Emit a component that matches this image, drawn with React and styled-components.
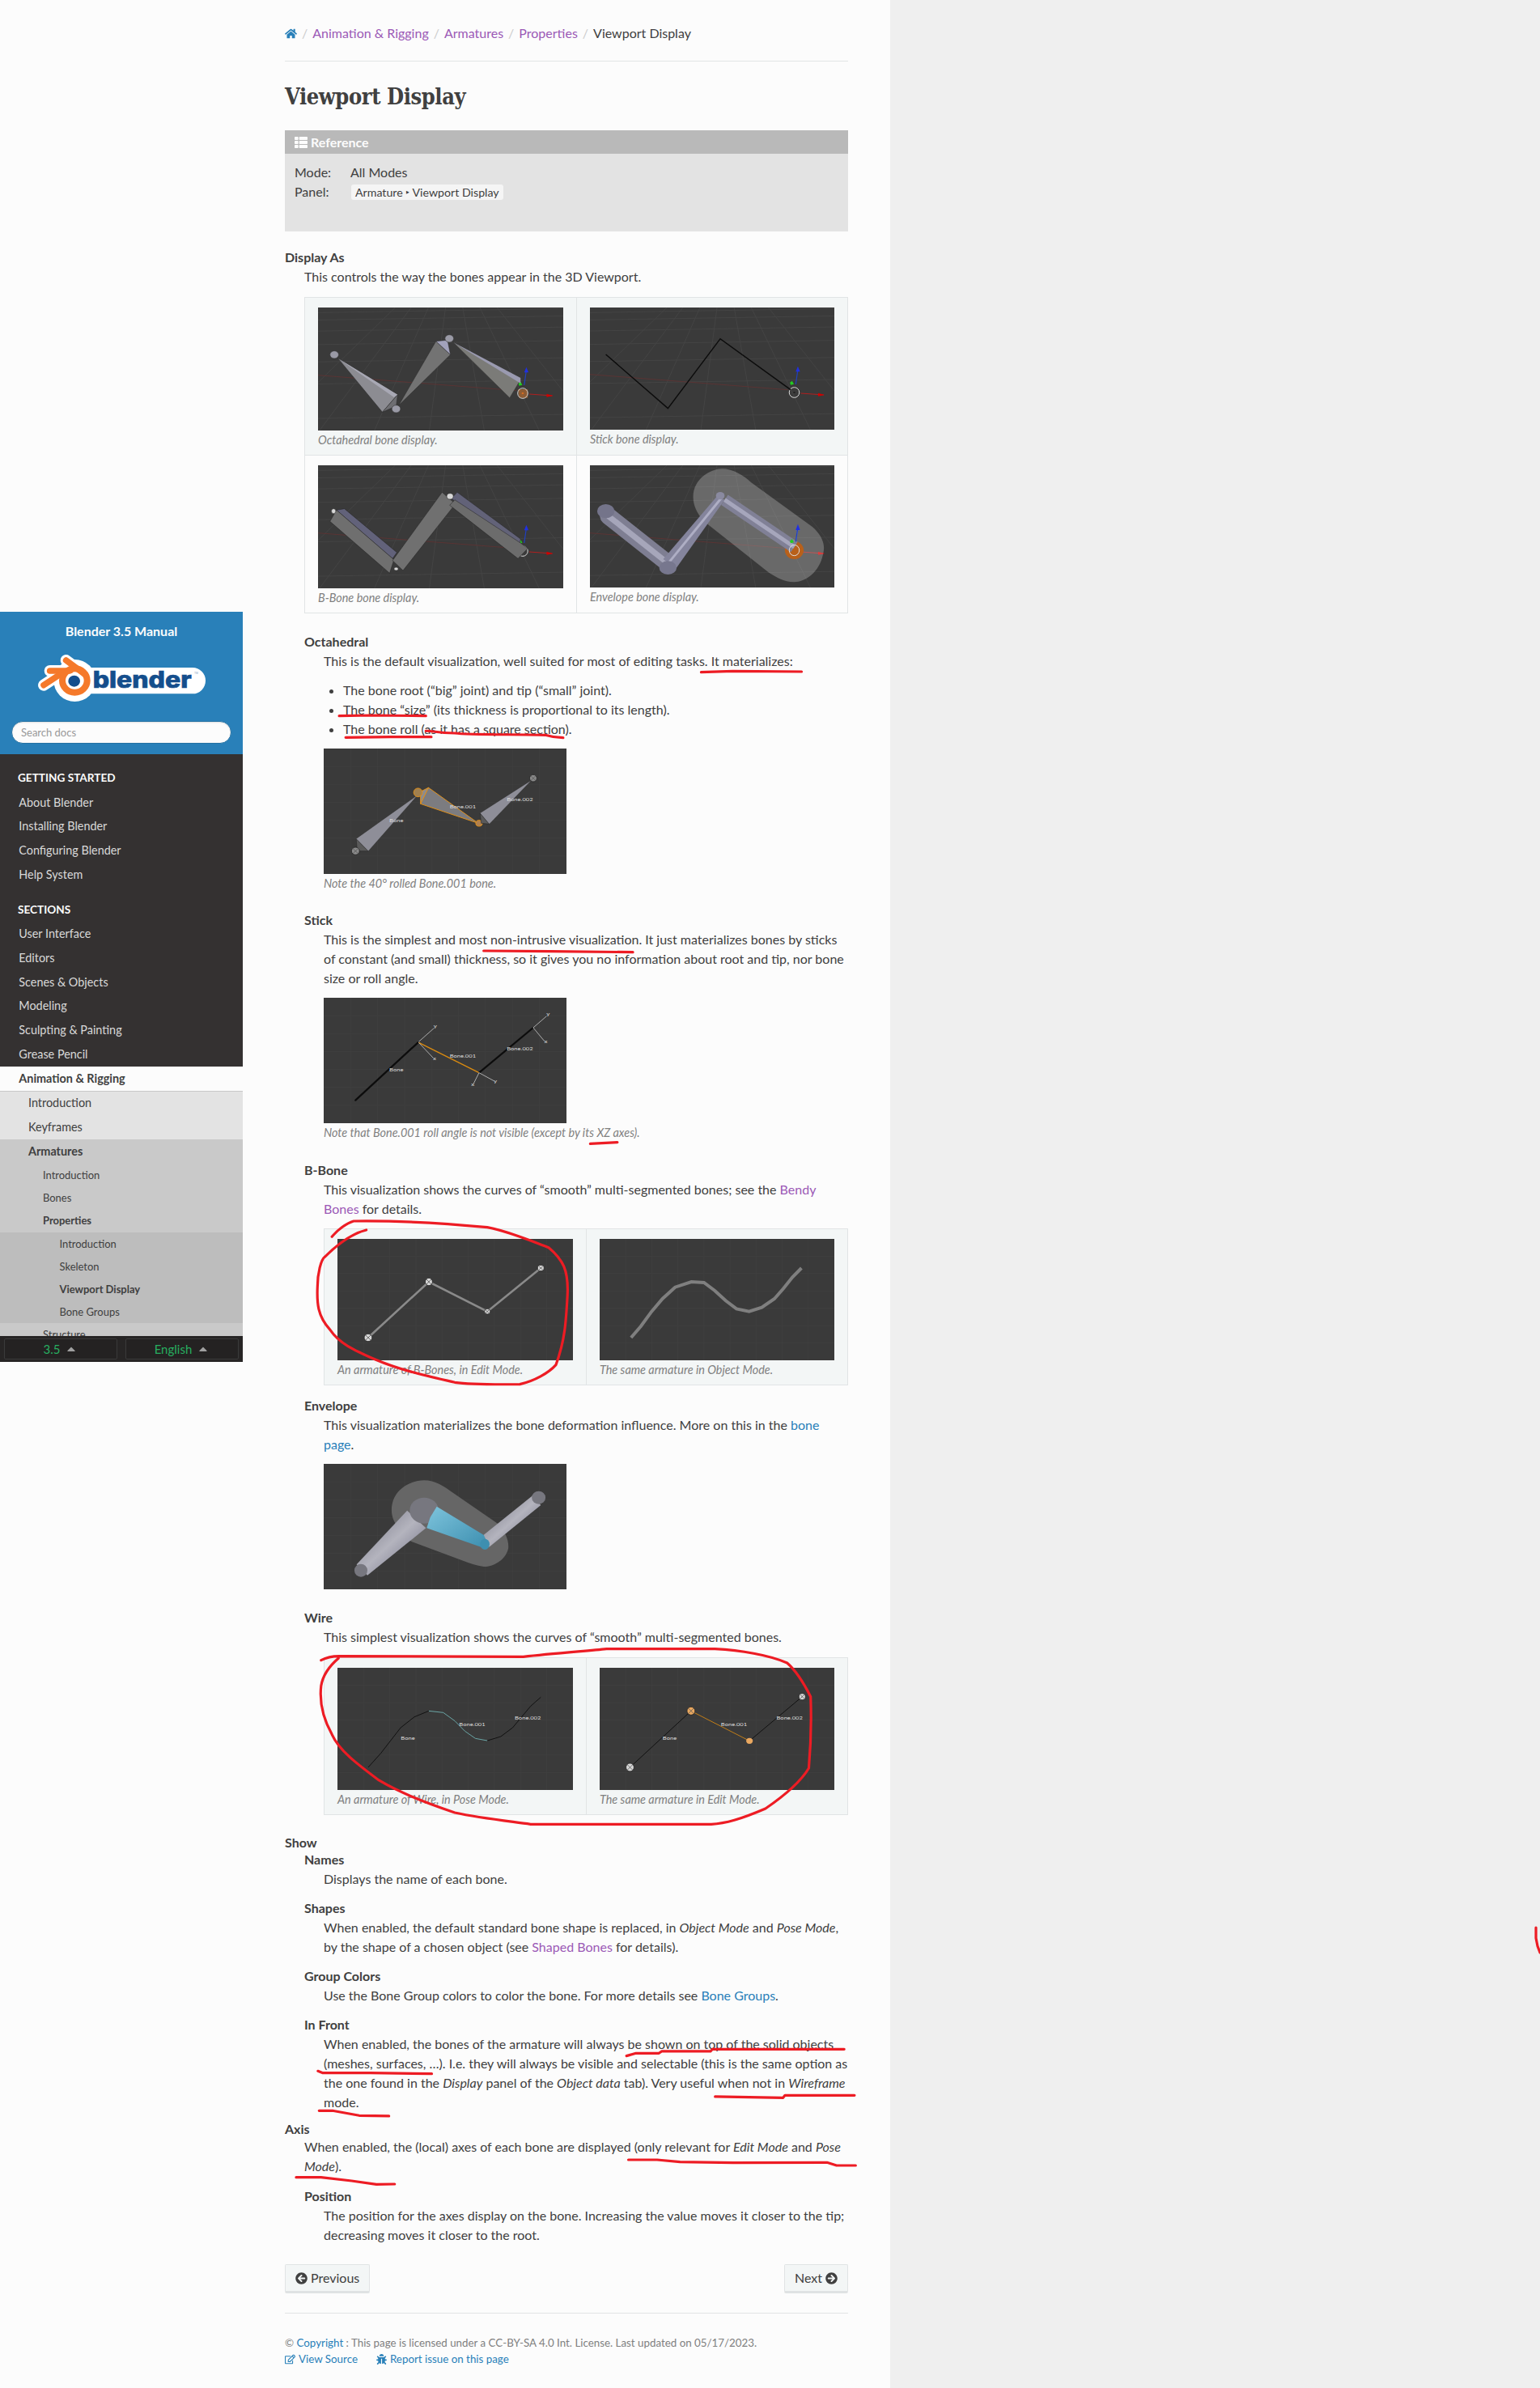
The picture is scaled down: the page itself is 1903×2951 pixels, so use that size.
import React from "react";
import styled, { createGlobalStyle } from "styled-components";
import { FaHome, FaThList, FaArrowCircleLeft, FaArrowCircleRight, FaRegEdit, FaBug, FaCaretUp } from "react-icons/fa";

const Global = createGlobalStyle`
  html, body { margin: 0; padding: 0; background: #efefef; }
  body { font-family: "Lato", "Liberation Sans", sans-serif; color: #404040; font-size: 16px; line-height: 24px; }
  * { box-sizing: border-box; }
`;

const Canvas = styled.div`
  position: relative;
  width: 1903px;
  height: 2951px;
  overflow: hidden;
  background: #efefef;
`;
const Page = styled.div`
  display: flex;
  width: 1100px;
  height: 2951px;
  background: #fcfcfc;
`;
const Side = styled.aside`
  flex: none;
  width: 300px;
  height: 927px;
  margin-top: 756px;
  display: flex;
  flex-direction: column;
`;
const SideHead = styled.div`
  height: 176px;
  background: #2980b9;
  padding-top: 12px;
  color: #fcfcfc;
  text-align: center;
`;
const SideTitle = styled.div`
  font-weight: 700;
  font-size: 16px;
  line-height: 24px;
`;
const LogoBox = styled.div`
  margin: 8px 0 16px 30px;
  width: 240px;
  height: 75px;
  & svg { display: block; }
`;
const Search = styled.div`
  margin: 0 14px;
  height: 28px;
  border-radius: 14px;
  border: 1px solid #2472a4;
  background: #fcfcfc;
  box-shadow: inset 0 1px 2px rgba(0,0,0,.12);
  color: #999;
  font-size: 13px;
  line-height: 26px;
  text-align: left;
  padding-left: 11px;
`;
const Nav = styled.nav`
  height: 719px;
  overflow: hidden;
  background: #343131;
`;
const Caption = styled.div`
  font-weight: 700;
  font-size: 13.6px;
  line-height: 32px;
  margin-top: ${p => p.$top}px;
  padding-left: 22px;
  color: #fcfcfc;
`;
const levelStyle = {
  1: { bg: "transparent", fg: "#d9d9d9", pad: 23.3, size: 14.4, py: 5.83 },
  2: { bg: "#e3e3e3", fg: "#404040", pad: 35, size: 14.4, py: 5.83 },
  3: { bg: "#c9c9c9", fg: "#404040", pad: 53, size: 12.96, py: 5.2 },
  4: { bg: "#bdbdbd", fg: "#404040", pad: 73.5, size: 12.96, py: 5 },
  head: { bg: "#c9c9c9", fg: "#404040", pad: 35, size: 14.4, py: 5.83 },
};
const NavLink = styled.div`
  background: ${p => levelStyle[p.$level].bg};
  color: ${p => levelStyle[p.$level].fg};
  padding: ${p => levelStyle[p.$level].py}px 0 ${p => levelStyle[p.$level].py}px ${p => levelStyle[p.$level].pad}px;
  font-size: ${p => levelStyle[p.$level].size}px;
  font-weight: ${p => (p.$bold ? 700 : 400)};
  line-height: 18px;
`;
const NavCurrent = styled.div`
  background: #fcfcfc;
  color: #404040;
  font-weight: 700;
  font-size: 14.4px;
  line-height: 18px;
  padding: 6px 0 6px 23.3px;
  border-bottom: 1px solid #c9c9c9;
  height: 31px;
`;
const SideFoot = styled.div`
  height: 32px;
  background: #272525;
  padding: 3px 5px;
  display: grid;
  grid-template-columns: 140px 140px;
  gap: 10px;
`;
const VersionBtn = styled.div`
  border: 1px solid #3a3a3a;
  border-radius: 2px;
  background: #242222;
  color: #27ae60;
  font-size: 15px;
  line-height: 24px;
  display: flex;
  align-items: center;
  justify-content: center;
  gap: 6px;
  & svg { color: #a0a0a0; }
`;

const Main = styled.main`
  flex: 1;
  min-width: 0;
  padding: 29px 52px 0;
`;
const Crumbs = styled.div`
  display: flex;
  align-items: center;
  height: 24px;
`;
const CrumbLink = styled.span`
  color: #9b59b6;
`;
const Sep = styled.span`
  color: #cccccc;
  padding: 0 5px;
  margin: 0 1px;
`;
const HomeIcon = styled.span`
  color: #2980b9;
  display: flex;
`;
const Rule = styled.div`
  height: 1px;
  background: #e1e4e5;
  margin-top: ${p => p.$top}px;
`;
const Title = styled.h1`
  margin: 26px 0 0;
  font-family: "DejaVu Serif", "Liberation Serif", serif;
  font-stretch: condensed;
  font-weight: 700;
  font-size: 27px;
  line-height: 36px;
  letter-spacing: -0.4px;
  color: #404040;
`;
const Admon = styled.div`
  margin-top: 23px;
  background: #e3e3e3;
  height: 125px;
`;
const AdmonHead = styled.div`
  height: 29px;
  background: #b9b9b9;
  color: #fcfcfc;
  font-weight: 700;
  padding-left: 12px;
  display: flex;
  align-items: center;
  gap: 4px;
  font-size: 16px;
`;
const Fields = styled.div`
  padding: 11px 0 0 12px;
`;
const FieldRow = styled.div`
  display: flex;
  height: 24px;
  align-items: center;
`;
const FieldName = styled.span`
  width: 69px;
`;
const Pill = styled.span`
  background: #f5f5f5;
  border-radius: 3px;
  padding: 0 5px;
  font-size: 14.2px;
  line-height: 19px;
  height: 19px;
  margin-left: 1px;
`;
const Term = styled.div`
  font-weight: 700;
  line-height: 24px;
  margin-top: ${p => p.$top || 0}px;
`;
const Dd = styled.div`
  margin-left: 24px;
`;
const P = styled.p`
  margin: ${p => p.$top || 0}px 0 0;
  line-height: 24px;
`;
const A = styled.span`
  color: ${p => (p.$visited ? "#9b59b6" : "#2980b9")};
`;
const Bullets = styled.ul`
  margin: 12px 0 0;
  padding: 0 0 0 24px;
  line-height: 24px;
`;
const Grid = styled.div`
  margin-top: ${p => p.$top || 12}px;
  border: 1px solid #e1e4e5;
  display: grid;
  grid-template-columns: repeat(2, ${p => p.$col}px);
`;
const Cell = styled.div`
  background: ${p => (p.$even ? "#fcfcfc" : "#f3f6f6")};
  padding: 12px 16px 6px;
  border-left: ${p => (p.$right ? "1px solid #e1e4e5" : "none")};
  border-top: ${p => (p.$even ? "1px solid #e1e4e5" : "none")};
`;
const Cap = styled.div`
  color: #808080;
  font-style: italic;
  font-size: 14.4px;
  line-height: 24px;
`;
const Fig = styled.div`
  margin-top: 12px;
`;
const ShotSvg = styled.svg`
  display: block;
  background: #3a3a3a;
  & * { vector-effect: non-scaling-stroke; }
  & text { font-family: "Lato", "Liberation Sans", sans-serif; fill: #dcdcdc; text-anchor: middle; }
`;
const Pager = styled.div`
  margin-top: 24px;
  display: flex;
  justify-content: space-between;
`;
const Btn = styled.div`
  height: 36px;
  padding: 0 12px;
  background: #f3f6f6;
  border: 1px solid #e1e4e5;
  border-bottom: 3px solid #dfe2e3;
  border-radius: 2px;
  display: flex;
  align-items: center;
  gap: 4px;
  color: #404040;
  font-size: 16px;
`;
const Foot = styled.div`
  margin-top: 26px;
  color: #808080;
  font-size: 13.35px;
  line-height: 20px;
`;
const FootLinks = styled.div`
  display: flex;
  gap: 23px;
  color: #2980b9;
  & span { display: inline-flex; align-items: center; gap: 4px; }
`;
const Overlay = styled.svg`
  position: absolute;
  left: 0;
  top: 0;
  pointer-events: none;
  & path { fill: none; stroke: #ed1c24; stroke-width: 3.2px; stroke-linecap: round; stroke-linejoin: round; vector-effect: non-scaling-stroke; }
`;

function Shot({ vb, w, h, children }) {
  return (
    <ShotSvg viewBox={vb} width={w} height={h} preserveAspectRatio="none">
      {children}
    </ShotSvg>
  );
}

function PGrid({ x, y, w, h }) {
  const rows = [0.02, 0.08, 0.17, 0.28, 0.42, 0.6, 0.88];
  const cols = [0.03, 0.16, 0.3, 0.44, 0.58, 0.72, 0.86];
  return (
    <g stroke="#444444" strokeWidth="1" fill="none">
      {rows.map(r => <line key={r} x1={x} y1={y + r * h + 10} x2={x + w} y2={y + r * h - 5} />)}
      {cols.map(c => <line key={c} x1={x + (c - 0.5) * w * 0.5 + w * 0.55} y1={y} x2={x + (c - 0.5) * w * 1.6 + w * 0.55} y2={y + h} />)}
    </g>
  );
}
function FlatGrid({ x, y, w, h }) {
  const n = [...Array(8).keys()];
  return (
    <g stroke="#3f3f3f" strokeWidth="1">
      {n.map(i => <line key={"v" + i} x1={x + (i + 1) * w / 9} y1={y} x2={x + (i + 1) * w / 9} y2={y + h} />)}
      {n.slice(0, 6).map(i => <line key={"h" + i} x1={x} y1={y + (i + 1) * h / 7} x2={x + w} y2={y + (i + 1) * h / 7} />)}
    </g>
  );
}
function Axes({ dy = 0, orange }) {
  return (
    <g transform={`translate(0 ${dy})`}>
      <line x1="52" y1="308" x2="600" y2="365" stroke="#5a3434" strokeWidth="1" />
      <line x1="636" y1="378" x2="700" y2="384" stroke="#b02020" strokeWidth="1" />
      <polygon points="684,377 702,384 684,389" fill="#d00000" />
      <line x1="622" y1="345" x2="628" y2="290" stroke="#2040c0" strokeWidth="1.2" />
      <polygon points="622,298 628,278 634,298" fill="#2030e0" />
      <polygon points="606,338 612,332 617,344 608,347" fill="#22cc22" />
      <ellipse cx="618" cy="375" rx="14" ry="19" fill="none" stroke="#d8d8d8" strokeWidth="1" />
      <ellipse cx="618" cy="375" rx="3" ry="3" fill={orange ? "#e07020" : "#222"} />
    </g>
  );
}
const Joint = ({ x, y, rx = 12, ry = 14, fill = "#9a9aa6" }) => (
  <ellipse cx={x} cy={y} rx={rx} ry={ry} fill={fill} stroke="#333" strokeWidth="0.6" />
);
const XJoint = ({ x, y, rx = 10, ry = 13, fill = "#d8d8d8" }) => (
  <g>
    <ellipse cx={x} cy={y} rx={rx} ry={ry} fill={fill} stroke="#222" strokeWidth="0.8" />
    <line x1={x - rx * 0.6} y1={y - ry * 0.6} x2={x + rx * 0.6} y2={y + ry * 0.6} stroke="#555" strokeWidth="0.8" />
    <line x1={x - rx * 0.6} y1={y + ry * 0.6} x2={x + rx * 0.6} y2={y - ry * 0.6} stroke="#555" strokeWidth="0.8" />
  </g>
);
const Label = ({ x, y, children }) => <text x={x} y={y} fontSize="17">{children}</text>;

const OctaShot = () => (
  <Shot vb="52 57 678 456" w={303} h={152}>
    <PGrid x={52} y={57} w={678} h={456} />
    <polygon points="605,360 632,360 632,392 608,392" fill="#b06a30" opacity=".7" />
    <Axes orange />
    <polygon points="107,245 272,380 230,445" fill="#8c8c92" stroke="#2a2a2a" strokeWidth="0.5" />
    <polygon points="230,445 272,380 268,425 255,430" fill="#6e6e72" stroke="#2a2a2a" strokeWidth="0.5" />
    <polygon points="107,245 272,380 262,390" fill="#a8a8b4" />
    <Joint x={97} y={232} /><Joint x={268} y={433} />
    <polygon points="275,420 378,182 418,232" fill="#737373" stroke="#2a2a2a" strokeWidth="0.5" />
    <polygon points="378,182 410,178 418,232" fill="#a2a2bc" stroke="#2a2a2a" strokeWidth="0.5" />
    <Joint x={415} y={172} />
    <polygon points="425,185 612,325 582,392" fill="#7b7b78" stroke="#2a2a2a" strokeWidth="0.5" />
    <polygon points="425,185 612,318 612,338" fill="#9a9ab0" />
  </Shot>
);
const StickShot = () => (
  <Shot vb="52 60 677 453" w={302} h={151}>
    <PGrid x={52} y={60} w={677} h={453} />
    <Axes />
    <polyline points="96,234 268,434 413,176 608,365" fill="none" stroke="#0c0c0c" strokeWidth="1.5" />
  </Shot>
);
const BboneShot = () => (
  <Shot vb="52 642 678 456" w={303} h={152}>
    <PGrid x={52} y={642} w={678} h={456} />
    <Axes dy={585} />
    <polygon points="103,808 125,803 270,965 258,988" fill="#62627a" stroke="#222" strokeWidth="0.5" />
    <polygon points="85,850 103,808 262,992 250,1042" fill="#6f6f6f" stroke="#222" strokeWidth="0.5" />
    <polygon points="258,995 395,742 432,785 287,1032" fill="#707070" stroke="#222" strokeWidth="0.5" />
    <polygon points="437,742 612,915 610,935 420,765" fill="#626278" stroke="#222" strokeWidth="0.5" />
    <polygon points="416,790 430,770 612,930 632,950 605,988" fill="#6c6c6c" stroke="#222" strokeWidth="0.5" />
    <Joint x={95} y={812} rx={6} ry={9} fill="#d8d8d8" /><Joint x={417} y={757} rx={9} ry={11} fill="#d8d8d8" /><Joint x={268} y={1026} rx={6} ry={6} fill="#d8d8d8" />
  </Shot>
);
const EnvShot = () => (
  <Shot vb="52 642 677 453" w={302} h={151}>
    <defs>
      <linearGradient id="envbone" x1="0" y1="0" x2="1" y2="0">
        <stop offset="0" stopColor="#6e6e82" /><stop offset=".5" stopColor="#a8a8bc" /><stop offset="1" stopColor="#7a7a90" />
      </linearGradient>
    </defs>
    <PGrid x={52} y={642} w={677} h={453} />
    <Axes dy={585} />
    <path d="M338 760 C338 690 388 655 418 655 C448 655 478 680 498 705 L668 870 C698 905 704 940 698 970 C688 1040 648 1075 618 1075 C588 1075 568 1055 548 1040 L368 850 C348 820 338 790 338 760Z" fill="rgba(255,255,255,.24)" />
    <ellipse cx="618" cy="957" rx="26" ry="33" fill="#b8601a" />
    <line x1="103" y1="830" x2="268" y2="1005" stroke="#7e7e92" strokeWidth="21" strokeLinecap="round" />
    <line x1="103" y1="830" x2="268" y2="1005" stroke="#a6a6ba" strokeWidth="7" />
    <line x1="425" y1="770" x2="618" y2="945" stroke="#808096" strokeWidth="15" />
    <line x1="425" y1="770" x2="618" y2="945" stroke="#a6a6bc" strokeWidth="5" />
    <polygon points="255,990 405,755 425,770 290,1025" fill="#84849c" />
    <line x1="272" y1="1000" x2="415" y2="765" stroke="#aeaec4" strokeWidth="3" />
    <ellipse cx="96" cy="812" rx="24" ry="26" fill="#74748a" />
    <ellipse cx="268" cy="1022" rx="24" ry="25" fill="#77778e" />
    <ellipse cx="413" cy="755" rx="12" ry="14" fill="#8a8aa0" />
    <ellipse cx="618" cy="957" rx="14" ry="20" fill="none" stroke="#ddd" strokeWidth="1" />
    <line x1="622" y1="925" x2="628" y2="872" stroke="#2040c0" strokeWidth="1.2" />
    <polygon points="622,882 628,860 634,882" fill="#2030e0" />
    <polygon points="606,923 612,915 617,928 608,931" fill="#22cc22" />
  </Shot>
);
const NoteShot = () => (
  <Shot vb="67 435 672 465" w={300} h={155}>
    <FlatGrid x={67} y={435} w={672} h={465} />
    <polygon points="157,770 325,610 190,815" fill="#8e8e98" />
    <polygon points="157,770 190,815 160,815" fill="#5a5a5a" stroke="#222" strokeWidth="0.5" />
    <XJoint x={155} y={815} rx={11} ry={14} fill="#8a8a8a" />
    <polygon points="335,640 357,580 495,712" fill="#7c7c80" stroke="#e0901a" strokeWidth="1" />
    <polygon points="335,595 357,580 335,640" fill="#8c8c90" stroke="#e0901a" strokeWidth="1" />
    <ellipse cx="328" cy="598" rx="12" ry="16" fill="#a08050" stroke="#e0901a" strokeWidth="1" />
    <ellipse cx="497" cy="712" rx="9" ry="11" fill="#b08050" stroke="#e0901a" strokeWidth="1" />
    <polygon points="500,675 640,555 525,715" fill="#8e8e98" />
    <polygon points="500,675 525,715 503,712" fill="#5a5a5a" stroke="#222" strokeWidth="0.5" />
    <XJoint x={647} y={545} rx={10} ry={13} fill="#8a8a8a" />
    <Label x={268} y={708}>Bone</Label><Label x={452} y={656}>Bone.001</Label><Label x={610} y={630}>Bone.002</Label>
  </Shot>
);
const AxisLine = ({ x1, y1, x2, y2, name }) => (
  <g>
    <line x1={x1} y1={y1} x2={x2} y2={y2} stroke="#c8c8c8" strokeWidth="0.8" />
    <text x={x2 + (x2 > x1 ? 4 : -2)} y={y2 + (y2 > y1 ? 8 : -2)} fontSize="18">{name}</text>
  </g>
);
const StickAxesShot = () => (
  <Shot vb="67 372 672 465" w={300} h={155}>
    <FlatGrid x={67} y={372} w={672} h={465} />
    <line x1="155" y1="752" x2="328" y2="538" stroke="#0c0c0c" strokeWidth="2.2" strokeLinecap="round" />
    <line x1="330" y1="538" x2="497" y2="650" stroke="#d98a10" strokeWidth="1.4" />
    <line x1="497" y1="650" x2="647" y2="483" stroke="#0c0c0c" strokeWidth="2.2" />
    <AxisLine x1={330} y1={535} x2={372} y2={485} name="y" /><AxisLine x1={330} y1={538} x2={370} y2={595} name="x" />
    <AxisLine x1={497} y1={650} x2={538} y2={680} name="y" /><AxisLine x1={497} y1={650} x2={482} y2={690} name="x" />
    <AxisLine x1={647} y1={483} x2={684} y2={440} name="y" /><AxisLine x1={647} y1={483} x2={678} y2={533} name="x" />
    <Label x={268} y={645}>Bone</Label><Label x={452} y={594}>Bone.001</Label><Label x={610} y={568}>Bone.002</Label>
  </Shot>
);
const BEditShot = () => (
  <Shot vb="105 96 652 450" w={291} h={150}>
    <FlatGrid x={105} y={96} w={652} h={450} />
    <polyline points="190,462 358,255 520,365 668,204" fill="none" stroke="#8a8a8a" strokeWidth="2.6" />
    <XJoint x={190} y={462} rx={11} ry={14} /><XJoint x={358} y={255} rx={10} ry={14} /><XJoint x={520} y={365} rx={8} ry={10} /><XJoint x={668} y={204} rx={9} ry={11} />
  </Shot>
);
const BObjShot = () => (
  <Shot vb="831 96 650 450" w={290} h={150}>
    <FlatGrid x={831} y={96} w={650} h={450} />
    <polyline points="918,462 945,420 975,365 1005,318 1040,275 1085,255 1120,258 1150,288 1180,325 1210,355 1245,365 1280,350 1315,318 1340,280 1365,238 1390,204" fill="none" stroke="#7f7f7f" strokeWidth="4" />
  </Shot>
);
const EnvEditShot = () => (
  <Shot vb="67 927 672 465" w={300} h={155}>
    <defs>
      <linearGradient id="metal" x1="0" y1="0" x2="1" y2="1">
        <stop offset="0" stopColor="#6e6e7c" /><stop offset=".5" stopColor="#b4b4be" /><stop offset="1" stopColor="#62627a" />
      </linearGradient>
      <linearGradient id="teal" x1="0" y1="0" x2="1" y2="1">
        <stop offset="0" stopColor="#7ec4dc" /><stop offset="1" stopColor="#3d8fb0" />
      </linearGradient>
    </defs>
    <FlatGrid x={67} y={927} w={672} h={465} />
    <path d="M255 1100 C255 1020 310 988 345 988 C375 988 400 1010 420 1030 L550 1150 C570 1180 580 1210 578 1240 C570 1290 530 1310 510 1308 C490 1305 470 1295 450 1285 L310 1215 C280 1185 255 1140 255 1100Z" fill="#666666" />
    <polygon points="158,1300 298,1100 350,1165 188,1340" fill="url(#metal)" />
    <ellipse cx="170" cy="1322" rx="18" ry="24" fill="#77777f" />
    <ellipse cx="345" cy="1100" rx="40" ry="48" fill="#77777f" />
    <polygon points="380,1085 515,1195 512,1240 352,1165 362,1125" fill="url(#teal)" />
    <polygon points="510,1190 645,1045 668,1080 525,1235" fill="url(#metal)" />
    <ellipse cx="513" cy="1225" rx="13" ry="20" fill="#3d8fb0" />
    <ellipse cx="662" cy="1052" rx="19" ry="24" fill="#77777f" />
  </Shot>
);
const WirePoseShot = () => (
  <Shot vb="105 183 652 453" w={291} h={151}>
    <FlatGrid x={105} y={183} w={652} h={453} />
    <polyline points="190,552 225,500 280,405 318,365 358,343" fill="none" stroke="#111" strokeWidth="1" />
    <polyline points="358,343 398,349 430,380 458,418 487,445 520,453" fill="none" stroke="#6aa5a5" strokeWidth="1" />
    <polyline points="520,453 557,438 590,405 640,325 668,292" fill="none" stroke="#111" strokeWidth="1" />
    <Label x={300} y={449}>Bone</Label><Label x={478} y={399}>Bone.001</Label><Label x={632} y={374}>Bone.002</Label>
  </Shot>
);
const WireEditShot = () => (
  <Shot vb="831 183 650 453" w={290} h={151}>
    <FlatGrid x={831} y={183} w={650} h={453} />
    <line x1="915" y1="552" x2="1084" y2="343" stroke="#111" strokeWidth="1" />
    <line x1="1084" y1="343" x2="1246" y2="454" stroke="#c27e18" strokeWidth="1" />
    <line x1="1246" y1="454" x2="1392" y2="290" stroke="#111" strokeWidth="1" />
    <XJoint x={915} y={552} rx={11} ry={15} /><XJoint x={1392} y={290} rx={9} ry={12} />
    <XJoint x={1084} y={343} rx={11} ry={15} fill="#eaa860" /><ellipse cx="1246" cy="454" rx="9" ry="11" fill="#eaa860" />
    <Label x={1025} y={449}>Bone</Label><Label x={1203} y={399}>Bone.001</Label><Label x={1357} y={374}>Bone.002</Label>
  </Shot>
);

const Logo = () => (
  <svg width="240" height="75" viewBox="0 0 720 225">
    <g fill="none" strokeLinecap="round" stroke="#fff" strokeWidth="42">
      <line x1="155" y1="48" x2="225" y2="100" />
      <line x1="95" y1="87" x2="170" y2="87" />
      <line x1="72" y1="140" x2="145" y2="92" />
    </g>
    <circle cx="187" cy="123" r="78" fill="#fff" />
    <rect x="200" y="75" width="472" height="97" rx="48" fill="#fff" />
    <g fill="none" strokeLinecap="round" stroke="#f5792a" strokeWidth="23">
      <line x1="155" y1="48" x2="225" y2="100" />
      <line x1="95" y1="87" x2="170" y2="87" />
      <line x1="72" y1="140" x2="145" y2="92" />
    </g>
    <ellipse cx="187" cy="123" rx="46" ry="44" fill="none" stroke="#f5792a" strokeWidth="24" />
    <circle cx="186" cy="123" r="29" fill="#fff" />
    <ellipse cx="185" cy="125" rx="22" ry="21" fill="#144e8c" />
    <text x="254" y="150" fontFamily="Inter, Liberation Sans, sans-serif" fontWeight="800" fontSize="84" fill="#144e8c" textLength="366" lengthAdjust="spacingAndGlyphs" stroke="#144e8c" strokeWidth="2">blender</text>
    <text x="630" y="100" fontFamily="Liberation Sans, sans-serif" fontSize="10" fill="#8aa6c4">TM</text>
  </svg>
);

const nav1 = ["About Blender", "Installing Blender", "Configuring Blender", "Help System"];
const nav2 = ["User Interface", "Editors", "Scenes & Objects", "Modeling", "Sculpting & Painting", "Grease Pencil"];
const sub3 = [["Introduction"], ["Bones"], ["Properties", true]];
const sub4 = [["Introduction"], ["Skeleton"], ["Viewport Display", true], ["Bone Groups"]];

const Scale = ({ x, y, k, d }) => (
  <g transform={`translate(${x} ${y}) scale(${k} 0.3333)`}>
    {d.map(p => <path key={p} d={p} />)}
  </g>
);
const K7 = 700 / 1568;
const K9 = 740 / 1568;

const Sidebar = () => (
  <Side>
    <SideHead>
      <SideTitle>Blender 3.5 Manual</SideTitle>
      <LogoBox><Logo /></LogoBox>
      <Search>Search docs</Search>
    </SideHead>
    <Nav>
      <Caption $top={13}>GETTING STARTED</Caption>
      {nav1.map(t => <NavLink key={t} $level={1}>{t}</NavLink>)}
      <Caption $top={12}>SECTIONS</Caption>
      {nav2.map(t => <NavLink key={t} $level={1}>{t}</NavLink>)}
      <NavCurrent>Animation &amp; Rigging</NavCurrent>
      <NavLink $level={2}>Introduction</NavLink>
      <NavLink $level={2}>Keyframes</NavLink>
      <NavLink $level="head" $bold>Armatures</NavLink>
      {sub3.map(([t, b]) => <NavLink key={t} $level={3} $bold={b}>{t}</NavLink>)}
      {sub4.map(([t, b]) => <NavLink key={t} $level={4} $bold={b}>{t}</NavLink>)}
      <NavLink $level={3}>Structure</NavLink>
    </Nav>
    <SideFoot>
      <VersionBtn>3.5 <FaCaretUp size={16} /></VersionBtn>
      <VersionBtn>English <FaCaretUp size={16} /></VersionBtn>
    </SideFoot>
  </Side>
);

export default function App() {
  return (
    <Canvas>
      <Global />
      <Page>
        <Sidebar />
        <Main>
          <Crumbs>
            <HomeIcon><FaHome size={15} /></HomeIcon><Sep>/</Sep>
            <CrumbLink>Animation &amp; Rigging</CrumbLink><Sep>/</Sep>
            <CrumbLink>Armatures</CrumbLink><Sep>/</Sep>
            <CrumbLink>Properties</CrumbLink><Sep>/</Sep>
            <span>Viewport Display</span>
          </Crumbs>
          <Rule $top={22} />
          <Title>Viewport Display</Title>
          <Admon>
            <AdmonHead><FaThList size={16} /> Reference</AdmonHead>
            <Fields>
              <FieldRow><FieldName>Mode:</FieldName><span>All Modes</span></FieldRow>
              <FieldRow><FieldName>Panel:</FieldName><Pill>Armature ‣ Viewport Display</Pill></FieldRow>
            </Fields>
          </Admon>

          <Term $top={20}>Display As</Term>
          <Dd>
            <P>This controls the way the bones appear in the 3D Viewport.</P>
            <Grid $col={335} $top={13}>
              <Cell><OctaShot /><Cap>Octahedral bone display.</Cap></Cell>
              <Cell $right><StickShot /><Cap>Stick bone display.</Cap></Cell>
              <Cell $even><BboneShot /><Cap>B-Bone bone display.</Cap></Cell>
              <Cell $even $right><EnvShot /><Cap>Envelope bone display.</Cap></Cell>
            </Grid>

            <Term $top={23}>Octahedral</Term>
            <Dd>
              <P>This is the default visualization, well suited for most of editing tasks. It materializes:</P>
              <Bullets>
                <li>The bone root (“big” joint) and tip (“small” joint).</li>
                <li>The bone “size” (its thickness is proportional to its length).</li>
                <li>The bone roll (as it has a square section).</li>
              </Bullets>
              <Fig><NoteShot /><Cap>Note the 40° rolled Bone.001 bone.</Cap></Fig>
            </Dd>

            <Term $top={21}>Stick</Term>
            <Dd>
              <P>This is the simplest and most non-intrusive visualization. It just materializes bones by sticks of constant (and small) thickness, so it gives you no information about root and tip, nor bone size or roll angle.</P>
              <Fig><StickAxesShot /><Cap>Note that Bone.001 roll angle is not visible (except by its XZ axes).</Cap></Fig>
            </Dd>

            <Term $top={22}>B-Bone</Term>
            <Dd>
              <P>This visualization shows the curves of “smooth” multi-segmented bones; see the <A $visited>Bendy Bones</A> for details.</P>
              <Grid $col={323}>
                <Cell><BEditShot /><Cap>An armature of B-Bones, in Edit Mode.</Cap></Cell>
                <Cell $right><BObjShot /><Cap>The same armature in Object Mode.</Cap></Cell>
              </Grid>
            </Dd>

            <Term $top={13}>Envelope</Term>
            <Dd>
              <P>This visualization materializes the bone deformation influence. More on this in the <A>bone page</A>.</P>
              <Fig><EnvEditShot /></Fig>
            </Dd>

            <Term $top={23}>Wire</Term>
            <Dd>
              <P>This simplest visualization shows the curves of “smooth” multi-segmented bones.</P>
              <Grid $col={323} $top={13}>
                <Cell><WirePoseShot /><Cap>An armature of Wire, in Pose Mode.</Cap></Cell>
                <Cell $right><WireEditShot /><Cap>The same armature in Edit Mode.</Cap></Cell>
              </Grid>
            </Dd>
          </Dd>

          <Term $top={22}>Show</Term>
          <Dd>
            <Term $top={-3}>Names</Term>
            <Dd><P>Displays the name of each bone.</P></Dd>
            <Term $top={12}>Shapes</Term>
            <Dd><P>When enabled, the default standard bone shape is replaced, in <em>Object Mode</em> and <em>Pose Mode</em>, by the shape of a chosen object (see <A $visited>Shaped Bones</A> for details).</P></Dd>
            <Term $top={12}>Group Colors</Term>
            <Dd><P>Use the Bone Group colors to color the bone. For more details see <A>Bone Groups</A>.</P></Dd>
            <Term $top={12}>In Front</Term>
            <Dd><P>When enabled, the bones of the armature will always be shown on top of the solid objects (meshes, surfaces, …). I.e. they will always be visible and selectable (this is the same option as the one found in the <em>Display</em> panel of the <em>Object data</em> tab). Very useful when not in <em>Wireframe</em> mode.</P></Dd>
          </Dd>

          <Term $top={9}>Axis</Term>
          <Dd>
            <P $top={-2}>When enabled, the (local) axes of each bone are displayed (only relevant for <em>Edit Mode</em> and <em>Pose Mode</em>).</P>
            <Term $top={13}>Position</Term>
            <Dd><P>The position for the axes display on the bone. Increasing the value moves it closer to the tip; decreasing moves it closer to the root.</P></Dd>
          </Dd>

          <Pager>
            <Btn><FaArrowCircleLeft size={15} /> Previous</Btn>
            <Btn>Next <FaArrowCircleRight size={15} /></Btn>
          </Pager>
          <Rule $top={24} />
          <Foot>
            <div>© <A>Copyright</A> : This page is licensed under a CC-BY-SA 4.0 Int. License. Last updated on 05/17/2023.</div>
            <FootLinks>
              <span><FaRegEdit size={13} /> View Source</span>
              <span><FaBug size={13} /> Report issue on this page</span>
            </FootLinks>
          </Foot>
        </Main>
      </Page>

      <Overlay width="1903" height="2951" viewBox="0 0 1903 2951">
        <Scale x={370} y={780} k={K7} d={[
          "M1112 152 L1200 148 L1390 150",
          "M110 314 L200 312 L350 314",
          "M128 394 L250 392 L365 392",
          "M350 370 C365 368 380 378 430 378 C470 385 600 382 680 385 C700 393 715 395 730 395",
        ]} />
        <Scale x={370} y={1110} k={K7} d={[
          "M510 195 L695 197 L923 200",
          "M805 910 L880 905",
        ]} />
        <Scale x={370} y={1500} k={K7} d={[
          "M90 85 C105 60 130 35 150 27 C250 25 400 35 520 50 C580 65 640 100 690 125 C730 170 745 210 742 300 C738 400 735 470 710 560 C690 590 650 620 610 632 C540 633 470 633 430 625 C350 600 280 580 210 540 C150 505 110 480 85 430 C50 380 48 330 50 270 C50 220 60 170 70 160 C100 120 140 75 185 60",
        ]} />
        <Scale x={370} y={2000} k={K7} d={[
          "M60 155 C70 148 90 140 110 140 L620 142 C700 130 800 120 850 113 L1150 113 C1220 118 1300 135 1350 165 C1380 200 1400 250 1415 290 C1418 400 1415 480 1410 555 C1390 600 1350 650 1290 705 C1220 745 1180 760 1140 763 L640 763 C570 750 500 740 430 720 C340 680 270 640 220 600 C160 540 110 490 90 430 C65 370 55 310 60 250 C65 210 80 180 108 148",
        ]} />
        <Scale x={340} y={2280} k={K9} d={[
          "M920 782 L945 772 L1005 772 L1012 765 L1140 765 L1145 757 L1490 757",
          "M112 838 L125 845 L250 845 L410 848",
          "M1152 933 L1330 937 L1335 928 L1517 928",
          "M115 985 L150 985 L220 1003 L298 1005",
        ]} />
        <Scale x={340} y={2620} k={K9} d={[
          "M925 147 L1000 147 L1060 155 L1200 158 L1445 157 L1470 168 L1520 168",
          "M55 212 L120 212 L200 225 L265 238 L313 237",
        ]} />
        <path d="M1898 2382 L1898 2395 L1900 2405 L1903 2413" />
      </Overlay>
    </Canvas>
  );
}
